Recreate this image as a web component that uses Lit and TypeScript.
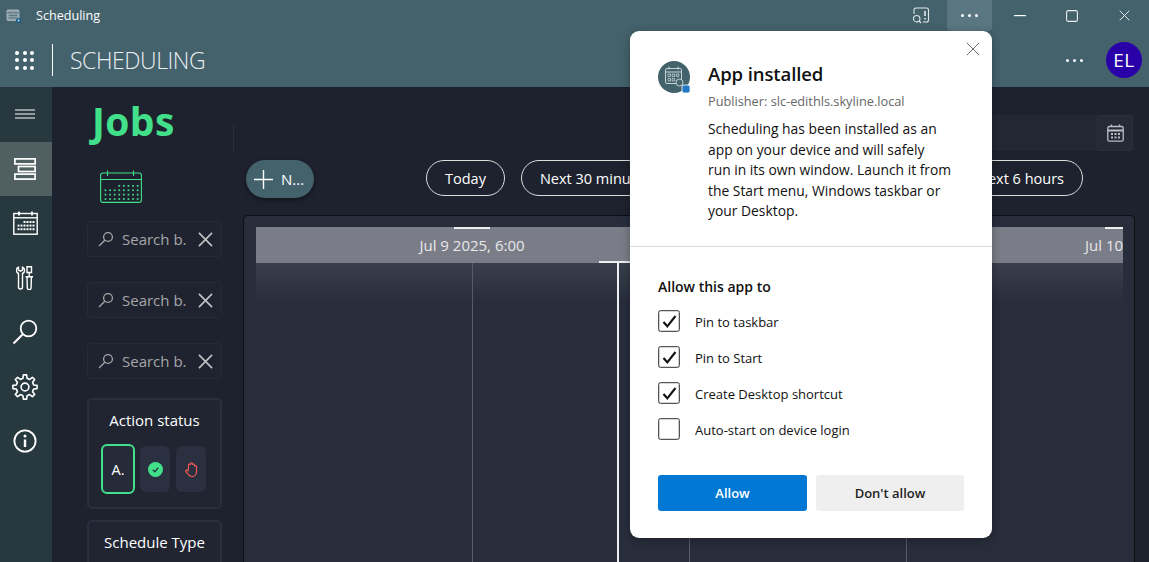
import { LitElement, html, css, svg } from "lit";
import { customElement } from "lit/decorators.js";

const calIcon = (w: number, h: number, color: string, rows = 4, cols = 8) => {
  const dots = [];
  for (let r = 0; r < rows; r++) {
    for (let c = r === 0 ? 3 : 0; c < cols; c++) {
      dots.push(svg`<rect x=${4.6 + c * 4.6} y=${15 + r * 4.4} width="1.7" height="1.7" fill=${color} stroke="none"></rect>`);
    }
  }
  return html`<svg width=${w} height=${h} viewBox="0 0 42 33" fill="none" stroke=${color} stroke-width="1.1">
    <rect x="0.6" y="3" width="40.8" height="29.4" rx="2.5"></rect>
    <path d="M0.6 9.500H41.400M7.500 0.500V6M33.500 0.500V6"></path>${dots}
  </svg>`;
};
const sideCal = () => {
  const dots = [];
  for (let r = 0; r < 3; r++) {
    for (let c = r === 0 ? 2 : 0; c < 6; c++) {
      dots.push(svg`<rect x=${4.5 + c * 3} y=${10 + r * 3.6} width="2" height="2" fill="#fff" stroke="none"></rect>`);
    }
  }
  return html`<svg width="25" height="24" viewBox="0 0 25 24" fill="none" stroke="#fff" stroke-width="1.400">
    <rect x=".8" y="2.500" width="23.400" height="20.700"></rect><path d="M.8 6.800H24.200" stroke-width="1.400"></path>
    <path d="M6 .5V4.500M19 .5V4.500" stroke-width="1.800"></path>${dots}</svg>`;
};
const gearPath = (() => {
  const cx = 13, cy = 13, R = 12.2, r = 8.9, n = 8;
  const pts: string[] = [];
  const p = (rad: number, a: number) => `${(cx + rad * Math.cos(a)).toFixed(2)} ${(cy + rad * Math.sin(a)).toFixed(2)}`;
  for (let i = 0; i < n; i++) {
    const a = (i * 2 * Math.PI) / n - Math.PI / 2;
    const s = (2 * Math.PI) / n;
    pts.push(`${i === 0 ? "M" : "L"}${p(r, a - s * 0.3)}`, `L${p(R, a - s * 0.17)}`, `L${p(R, a + s * 0.17)}`, `L${p(r, a + s * 0.3)}`);
  }
  return pts.join(" ") + "Z";
})();
const searchIcon = html`<svg width="16" height="16" viewBox="0 0 16 16" fill="none" stroke="#a6a6a8" stroke-width="1.3">
  <circle cx="10" cy="6" r="4.400"></circle><path d="M6.800 9.200L1 15"></path></svg>`;
const xIcon = (s: number, c: string, w = 1.5) => html`<svg width=${s} height=${s} viewBox="0 0 16 16" fill="none" stroke=${c} stroke-width=${w}>
  <path d="M1 1L15 15M15 1L1 15"></path></svg>`;
const check = html`<svg width="15" height="13" viewBox="0 0 15 13" fill="none" stroke="#111" stroke-width="2.100">
  <path d="M1.500 7L5.300 11.300L13.500 1"></path></svg>`;

@customElement("app-root")
export class AppRoot extends LitElement {
  static styles = css`
    :host { display: block; width: 1149px; height: 562px; position: relative; overflow: hidden;
      font-family: "Open Sans", "Noto Sans", sans-serif; background: #1e222e; color: #fff; }
    svg { display: block; }
    .title { height: 31px; background: #44626c; display: flex; align-items: stretch; }
    .app-icon { margin: 8px 0 0 6px; width: 16px; height: 16px; }
    .title-text { margin: 7px 0 0 14px; font-size: 12.6px; line-height: 18px; }
    .win { margin-left: auto; display: flex; }
    .win > div { display: flex; align-items: center; justify-content: center; height: 31px; }
    .w-cast { width: 50px; padding-right: 3px; box-sizing: border-box; }
    .w-more { width: 45px; background: #5a7680; border-radius: 0 0 4px 4px; }
    .w-min { width: 56px; }
    .w-max { width: 48px; }
    .w-close { width: 50px; margin-left: 3px; }
    .dots { display: flex; gap: 4px; }
    .dots i { width: 3px; height: 3px; background: #fff; border-radius: 50%; }
    .appbar { height: 56px; box-sizing: border-box; padding-top: 2px; background: #44626c; display: flex; align-items: center; }
    .grid9 { margin-left: 15px; display: grid; grid-template-columns: repeat(3, 4px); gap: 3.5px; }
    .grid9 i { width: 4px; height: 4px; border-radius: 50%; background: #fff; }
    .vsep { width: 1px; height: 32px; background: #fff; margin: 0 17px 0 18px; }
    .brand { font-size: 23px; font-weight: 300; color: #e9eef0; letter-spacing: -0.45px; }
    .bar-right { margin-left: auto; display: flex; align-items: center; margin-right: 7px; gap: 23px; }
    .avatar { width: 36px; height: 36px; border-radius: 50%; background: #2a00a8; display: flex; align-items: center; justify-content: center;
      font-size: 19px; font-weight: 500; letter-spacing: 0.5px; }
    .body { display: flex; height: 475px; }
    .side { width: 52px; background: #27393f; flex: none; display: flex; flex-direction: column; }
    .side div { height: 54.5px; box-sizing: border-box; padding-right: 2px; display: flex; align-items: center; justify-content: center; flex: none; }
    .side .on { background: #505f61; }
    .main { flex: 1; display: flex; min-width: 0; }
    .filters { width: 135px; margin-left: 35px; flex: none; display: flex; flex-direction: column; }
    .filters > * { flex: none; }
    .jobs { font-size: 39px; font-weight: 700; color: #42e08a; line-height: 44px; margin: 12px 0 0 5px; letter-spacing: 0.4px; }
    .fcal { margin: 27px 0 0 13px; }
    .search { height: 36px; box-sizing: border-box; border: 1px solid #262b38; border-radius: 4px; background: #1f232f; margin-top: 25px;
      display: flex; align-items: center; padding: 0 8px 0 10px; color: #a6a6a8; font-size: 15px; }
    .search span { margin-left: 8px; flex: 1; white-space: nowrap; overflow: hidden; }
    .fcal + .search { margin-top: 18px; }
    .card { border: 2px solid #2a2f3d; border-radius: 5px; background: #212531; margin-top: 19px; box-sizing: border-box; }
    .card h4 { margin: 0; text-align: center; font-size: 15px; font-weight: 400; color: #fff; line-height: 20px; padding-top: 10px; }
    .status { height: 111px; }
    .st { display: flex; gap: 6px; padding: 14px 0 0 12px; align-items: center; }
    .chip { width: 30px; height: 46px; border-radius: 6px; background: #2b3040; display: flex; align-items: center; justify-content: center; font-size: 14.5px; box-sizing: border-box; }
    .chip.sel { width: 34px; height: 50px; border: 2px solid #42e08a; background: #262b3a; margin-right: -1px; }
    .sched { margin-top: 11px; height: 60px; }
    .right { flex: 1; min-width: 0; margin-left: 11px; display: flex; flex-direction: column; }
    .top { height: 73px; flex: none; display: flex; justify-content: flex-end; position: relative; }
    .top::before { content: ""; position: absolute; left: 0; top: 37px; width: 1px; height: 28px; background: #2a2f3b; }
    .date { margin: 28px 16px 0 0; width: 260px; height: 36px; display: flex; justify-content: flex-end; background: #232733; border-radius: 0 3px 3px 0; }
    .date div { width: 36px; height: 36px; box-sizing: border-box; border: 1px solid #2a2f3b; background: #262a36; border-radius: 3px; display: flex; align-items: center; justify-content: center; }
    .tools { position: relative; display: flex; height: 55px; flex: none; padding-left: 13px; }
    .plus { width: 68px; height: 38px; background: #44626c; border-radius: 19px; display: flex; align-items: center; padding-left: 8px; gap: 8px; box-sizing: border-box;
      box-shadow: 0 2px 5px rgba(0,0,0,.45); font-size: 15px; }
    .plus span { margin-top: -1px; }
    .pills { margin-left: 112px; flex: 1; display: flex; gap: 16px; overflow: hidden; padding-right: 66px; height: 36px; }
    .pill { height: 36px; border: 1px solid #dcdcdc; border-radius: 18px; box-sizing: border-box; padding: 1px 18px 0; display: flex; align-items: center; font-size: 14.5px; white-space: nowrap; flex: none; }
    .pill.last { margin-left: auto; }
    .timeline { position: relative; flex: 1; margin: 0 14px 0 10px; background: #282d3c; border: 1px solid #0d0e12; border-bottom: 0; border-radius: 5px 5px 0 0; overflow: hidden; }
    .head { position: absolute; left: 12px; right: 11px; top: 11px; height: 36px; background: #7a7d87; overflow: hidden; }
    .shade { position: absolute; left: 12px; right: 11px; top: 47px; height: 40px; background: linear-gradient(#3a3f4d, #282d3c); }
    .lbl { position: absolute; top: 0; height: 36px; line-height: 36px; font-size: 15px; color: #e8e8ea; white-space: nowrap; }
    .lbl.c { transform: translateX(-50%); }
    .tick { position: absolute; top: 0; width: 36px; height: 2px; background: #eee; }
    .vl { position: absolute; top: 47px; bottom: 0; width: 1px; background: #575b68; }
    .now { position: absolute; top: 47px; bottom: 0; left: 373px; width: 2px; background: #eee; }
    .nowb { position: absolute; top: 45px; left: 355px; width: 40px; height: 2px; background: #eee; }
    .dlg { position: absolute; left: 630px; top: 31px; width: 362px; height: 507px; background: #fff; color: #111; border-radius: 9px;
      box-shadow: 0 2px 10px rgba(0,0,0,.3); box-sizing: border-box; display: flex; flex-direction: column; }
    .close { position: absolute; right: 12px; top: 11px; }
    .d-top { display: flex; padding: 29px 28px 0; box-sizing: border-box; border-bottom: 1px solid #dcdcdc; height: 216px; }
    .d-ic { width: 32px; height: 32px; border-radius: 50%; background: #44626c; position: relative; margin-top: 1px; flex: none; }
    .d-ic svg { position: absolute; left: 0; top: 0; }
    .d-txt { margin-left: 18px; }
    .d-txt h2 { margin: 0; font-size: 18.5px; font-weight: 600; line-height: 28px; letter-spacing: -0.1px; }
    .pub { font-size: 12.75px; color: #666; line-height: 18px; margin-top: 4px; }
    .msg { font-size: 13.85px; line-height: 20.5px; margin-top: 9px; white-space: nowrap; }
    .d-low { padding: 30px 28px 0; }
    .allow { font-size: 14px; font-weight: 600; line-height: 20px; }
    .chk { display: flex; align-items: center; height: 36px; font-size: 13px; }
    .chk span { margin-top: 2px; }
    .list { margin-top: 6px; }
    .box { width: 22px; height: 22px; box-sizing: border-box; border: 1px solid #555; border-radius: 2.5px; margin-right: 15px; display: flex; align-items: center; justify-content: center; box-shadow: inset 0 0 0 .3px #555; }
    .btns { display: flex; gap: 9px; margin-top: 28px; }
    .btn { height: 36px; border-radius: 3px; display: flex; align-items: center; justify-content: center; font-size: 13px; font-weight: 600; }
    .b1 { width: 149px; background: #0078d4; color: #fff; }
    .b2 { width: 148px; background: #efefef; color: #222; }
  `;

  render() {
    return html`
      <div class="title">
        <div class="app-icon"><svg width="17" height="17" viewBox="0 0 17 17" fill="none">
          <rect x="1" y="2" width="12" height="10.500" rx="1" fill="#8ca1a9" stroke="#b4c2c7" stroke-width=".8"></rect>
          <path d="M1 4.800H13M3 7.500h8M3 9.800h8" stroke="#5d7680" stroke-width="1"></path>
          <circle cx="12.500" cy="12.500" r="2.600" fill="#1f5e8c"></circle><circle cx="12.500" cy="12.500" r=".9" fill="#cfe3ee"></circle></svg></div>
        <div class="title-text">Scheduling</div>
        <div class="win">
          <div class="w-cast"><svg width="18" height="17" viewBox="0 0 18 17" fill="none" stroke="#dfe6e8" stroke-width="1.100">
            <path d="M2 7V3a2 2 0 0 1 2-2h10.500a2 2 0 0 1 2 2v10a2 2 0 0 1-2 2H11"></path><path d="M13 4v5M13 11v1.500" stroke-width="1.600"></path>
            <circle cx="4.700" cy="11.700" r="3.200"></circle><path d="M7 14l2.200 2"></path></svg></div>
          <div class="w-more"><div class="dots"><i></i><i></i><i></i></div></div>
          <div class="w-min"><svg width="12" height="2" viewBox="0 0 12 2"><rect width="12" height="1.200" fill="#fff"></rect></svg></div>
          <div class="w-max"><svg width="12" height="12" viewBox="0 0 12 12" fill="none" stroke="#e8eef0" stroke-width="1.100"><rect x=".6" y=".6" width="10.800" height="10.800" rx="1.500"></rect></svg></div>
          <div class="w-close">${xIcon(11, "#fff", 1.2)}</div>
        </div>
      </div>
      <div class="appbar">
        <div class="grid9">${Array.from({ length: 9 }, () => html`<i></i>`)}</div>
        <div class="vsep"></div>
        <div class="brand">SCHEDULING</div>
        <div class="bar-right"><div class="dots"><i></i><i></i><i></i></div><div class="avatar">EL</div></div>
      </div>
      <div class="body">
        <div class="side">
          <div><svg width="20" height="10" viewBox="0 0 20 10" stroke="#fff" stroke-width="1"><path d="M0 1H20M0 5H20M0 9H20"></path></svg></div>
          <div class="on"><svg width="22" height="22" viewBox="0 0 22 22" fill="none" stroke="#fff" stroke-width="1.700"><rect x=".9" y=".9" width="20.200" height="5"></rect><rect x="4.500" y="8.500" width="16.600" height="5"></rect><rect x=".9" y="16.100" width="20.200" height="5"></rect></svg></div>
          <div>${sideCal()}</div>
          <div><svg width="18" height="24" viewBox="0 0 18 24" fill="none" stroke="#fff" stroke-width="1.400">
            <path d="M2.500 1.200a3.400 3.400 0 0 0 0 6.300V21a2 2 0 0 0 4 0V7.500a3.400 3.400 0 0 0 0-6.300V4l-2 1.200-2-1.200z"></path>
            <path d="M11 .8h4.500v5.700h-4.500zM13.200 6.500v4"></path><path d="M9.500 10.800h7.500" stroke-width="1.600"></path>
            <path d="M11 10.800l.3 11a1.900 1.900 0 0 0 3.800 0l.3-11"></path></svg></div>
          <div><svg width="26" height="26" viewBox="0 0 26 26" fill="none" stroke="#fff" stroke-width="1.800"><circle cx="16.500" cy="9.500" r="7.800"></circle><path d="M11 15L1.500 24.500" stroke-width="2"></path></svg></div>
          <div><svg width="26" height="26" viewBox="0 0 26 26" fill="none" stroke="#fff" stroke-width="1.600" stroke-linejoin="round"><path d=${gearPath}></path><circle cx="13" cy="13" r="3.900"></circle></svg></div>
          <div><svg width="24" height="24" viewBox="0 0 24 24" fill="none" stroke="#fff" stroke-width="1.800"><circle cx="12" cy="12" r="10.600"></circle><path d="M12 10.500V18" stroke-width="2.400"></path><circle cx="12" cy="7" r="1.500" fill="#fff" stroke="none"></circle></svg></div>
        </div>
        <div class="main">
          <div class="filters">
            <div class="jobs">Jobs</div>
            <div class="fcal">${calIcon(42, 33, "#42e08a")}</div>
            ${[0, 1, 2].map(() => html`<div class="search">${searchIcon}<span>Search b.</span>${xIcon(15, "#c4c4c6", 1.7)}</div>`)}
            <div class="card status">
              <h4>Action status</h4>
              <div class="st">
                <div class="chip sel">A.</div>
                <div class="chip"><svg width="15" height="15" viewBox="0 0 15 15"><circle cx="7.500" cy="7.500" r="7.500" fill="#42e08a"></circle><path d="M4.800 7.800l2 2 3.500-4" fill="none" stroke="#1e3a35" stroke-width="1.300"></path></svg></div>
                <div class="chip"><svg width="13" height="15" viewBox="0 0 13 15" fill="none" stroke="#f05a55" stroke-width="1.200"><path d="M3.500 8V3a1 1 0 0 1 2 0V1.800a1 1 0 0 1 2 0V3a1 1 0 0 1 2 0v1.500a1 1 0 0 1 2 0V10a4.500 4.500 0 0 1-4.500 4.500H6.500C4.500 14.500 3.500 13 .8 9.500c-.6-1 .8-2 1.700-1.200L3.500 9.500"></path></svg></div>
              </div>
            </div>
            <div class="card sched"><h4>Schedule Type</h4></div>
          </div>
          <div class="right">
            <div class="top"><div class="date"><div><svg width="17" height="18" viewBox="0 0 17 18" fill="none" stroke="#b9bec4" stroke-width="1.300"><rect x=".8" y="2.500" width="15.400" height="14.700" rx="1.500"></rect><path d="M.8 6.500H16.200" stroke-width="2"></path><path d="M4.500 .5V3M12.500 .5V3"></path><path d="M4 10h9M4 13.500h9" stroke-width="2" stroke-dasharray="2 1.500"></path></svg></div></div></div>
            <div class="tools">
              <div class="plus"><svg width="19" height="19" viewBox="0 0 19 19" stroke="#fff" stroke-width="1.400"><path d="M9.500 0V19M0 9.500H19"></path></svg><span>N...</span></div>
              <div class="pills">
                <div class="pill">Today</div>
                <div class="pill">Next 30 minutes</div>
                <div class="pill last">Next 6 hours</div>
              </div>
            </div>
            <div class="timeline">
              <div class="head">
                <div class="tick" style="left:198px"></div><div class="tick" style="left:849px"></div>
                <div class="lbl c" style="left:216px">Jul 9 2025, 6:00</div>
                <div class="lbl" style="left:829px">Jul 10</div>
              </div>
              <div class="shade"></div>
              <div class="vl" style="left:228px"></div><div class="vl" style="left:445px"></div><div class="vl" style="left:662px"></div>
              <div class="nowb"></div><div class="now"></div>
            </div>
          </div>
        </div>
      </div>
      <div class="dlg">
        <div class="close">${xIcon(14, "#666", 1.1)}</div>
        <div class="d-top">
          <div class="d-ic"><svg width="32" height="32" viewBox="0 0 32 32" fill="none" stroke="#c5d2d6" stroke-width="1">
            <rect x="7.500" y="7.500" width="16" height="15" rx="1.500"></rect><path d="M7.500 11H23.500M11 5.500V8.500M20 5.500V8.500"></path>
            <path d="M10 13h2.500v2.500H10zM14.200 13h2.500v2.500h-2.500zM18.400 13h2.500v2.500h-2.500zM10 17.500h2.500V20H10zM14.200 17.500h2.500V20h-2.500z" stroke-width=".8"></path>
            <circle cx="21.500" cy="21.500" r="3.500" fill="#44626c"></circle>
            <rect x="24" y="24" width="8" height="8" rx="2" fill="#2178c4" stroke="#fff" stroke-width=".8"></rect></svg></div>
          <div class="d-txt">
            <h2>App installed</h2>
            <div class="pub">Publisher: slc-edithls.skyline.local</div>
            <div class="msg">Scheduling has been installed as an<br>app on your device and will safely<br>run in its own window. Launch it from<br>the Start menu, Windows taskbar or<br>your Desktop.</div>
          </div>
        </div>
        <div class="d-low">
          <div class="allow">Allow this app to</div>
          <div class="list">
            <div class="chk"><div class="box">${check}</div><span>Pin to taskbar</span></div>
            <div class="chk"><div class="box">${check}</div><span>Pin to Start</span></div>
            <div class="chk"><div class="box">${check}</div><span>Create Desktop shortcut</span></div>
            <div class="chk"><div class="box"></div><span>Auto-start on device login</span></div>
          </div>
          <div class="btns"><div class="btn b1">Allow</div><div class="btn b2">Don't allow</div></div>
        </div>
      </div>
    `;
  }
}
